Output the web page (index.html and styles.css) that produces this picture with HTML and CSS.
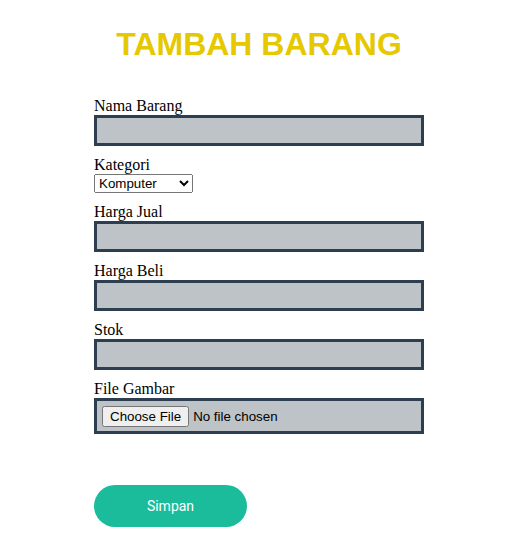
FILE: index.html
```html
<!DOCTYPE html>
<html lang="id">
<head>
<meta charset="utf-8">
<title>Tambah Barang</title>
<link rel="stylesheet" href="styles.css">
</head>
<body>
<div class="wrap">
  <h1 class="title">TAMBAH BARANG</h1>
  <form class="form">
    <label class="label" for="nama">Nama Barang</label>
    <input class="field" type="text" id="nama">
    <label class="label" for="kategori">Kategori</label>
    <select class="select" id="kategori">
      <option>Komputer</option>
      <option>Elektronik</option>
      <option>Aksesoris</option>
    </select>
    <label class="label" for="jual">Harga Jual</label>
    <input class="field" type="text" id="jual">
    <label class="label" for="beli">Harga Beli</label>
    <input class="field" type="text" id="beli">
    <label class="label" for="stok">Stok</label>
    <input class="field" type="text" id="stok">
    <label class="label" for="gambar">File Gambar</label>
    <input class="field file" type="file" id="gambar">
    <button class="btn" type="button">Simpan</button>
  </form>
</div>
</body>
</html>
```
FILE: styles.css
```css
html, body {
  margin: 0;
  padding: 0;
  background: #ffffff;
}
body {
  padding: 8px;
  font-family: "Liberation Serif", "Times New Roman", serif;
  font-size: 16px;
}
.wrap {
  width: 330px;
  margin-left: 86px;
}
.title {
  margin: 18px 0 34px;
  text-align: center;
  font-family: "Liberation Sans", Arial, sans-serif;
  font-size: 32px;
  font-weight: bold;
  line-height: 37px;
  color: #e6c800;
}
.form {
  display: flex;
  flex-direction: column;
  align-items: flex-start;
}
.label {
  display: block;
  line-height: 18px;
  color: #000;
}
.field {
  box-sizing: border-box;
  width: 330px;
  height: 31px;
  margin: 0 0 10px;
  border: 3px solid #2c3e50;
  background: #bdc3c7;
  border-radius: 0;
  padding: 0 6px;
  font-family: "Liberation Sans", Arial, sans-serif;
  font-size: 13.33px;
  outline: none;
}
.file {
  height: 36px;
  padding: 5px 5px;
  margin-bottom: 51px;
}
.select {
  box-sizing: border-box;
  width: 99px;
  height: 19px;
  margin: 0 0 10px;
  font-family: "Liberation Sans", Arial, sans-serif;
  font-size: 13.33px;
}
.btn {
  width: 153px;
  height: 42px;
  border: none;
  border-radius: 21px;
  background: #1abc9c;
  color: #ffffff;
  font-family: Roboto, "Liberation Sans", sans-serif;
  font-size: 14px;
  font-weight: 400;
  cursor: pointer;
}
```
